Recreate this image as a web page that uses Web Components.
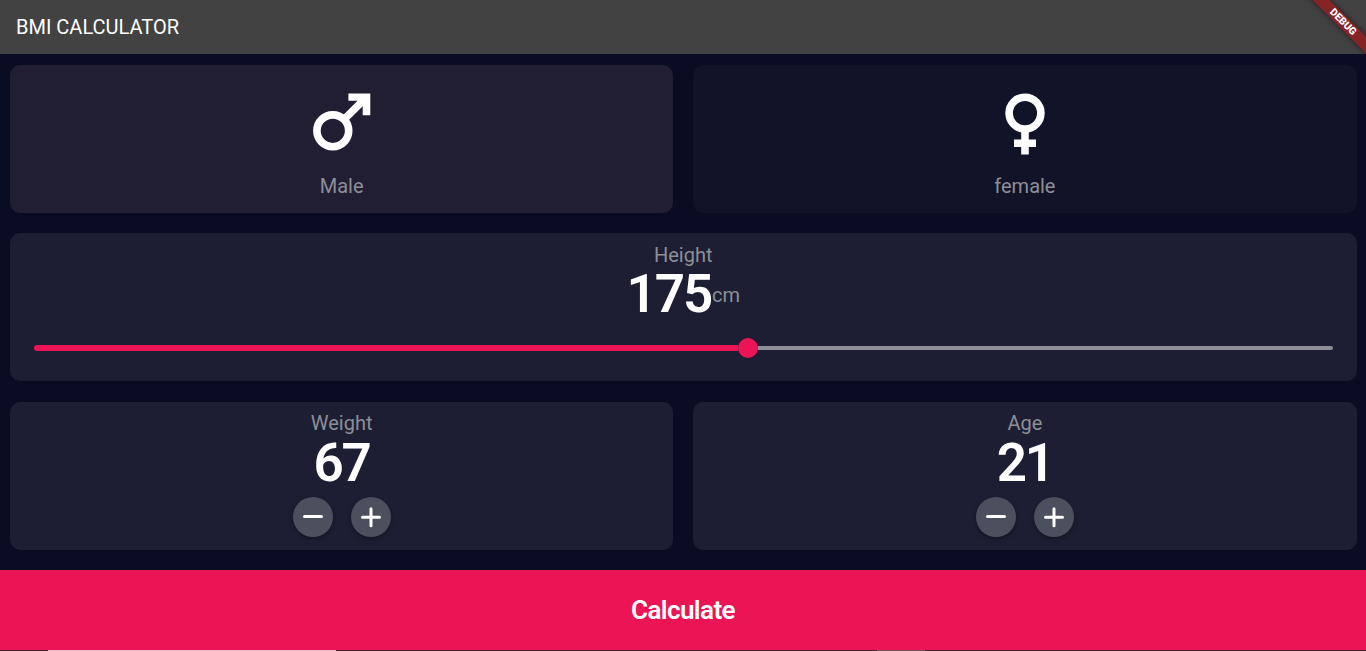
<!DOCTYPE html>
<html lang="en">
<head>
<meta charset="utf-8">
<title>BMI Calculator</title>
<style>
html,body{margin:0;height:100%;overflow:hidden;background:#090c22}
body{font-family:Roboto,sans-serif;color:#fff}
</style>
</head>
<body>
<bmi-app></bmi-app>
<script>
class Base extends HTMLElement {
  connectedCallback() {
    if (this.shadowRoot) return;
    this.attachShadow({mode: 'open'}).innerHTML = this.render();
  }
}

class AppHeader extends Base {
  render() {
    return `<style>
      :host{display:flex;align-items:center;position:relative;overflow:hidden;box-sizing:border-box;height:54px;padding-left:16px;background:#424242}
      h1{margin:0;font-size:20px;font-weight:450;line-height:24px;white-space:nowrap}
      .banner{position:absolute;right:-36.5px;top:16px;width:120px;height:12px;line-height:12px;background:#852326;transform:rotate(45deg);text-align:center;font-size:10.2px;font-weight:900;box-shadow:0 0 6px #0008}
    </style><h1><slot></slot></h1><div class="banner">DEBUG</div>`;
  }
}

class BmiCard extends Base {
  render() {
    return `<style>
      :host{display:flex;flex-direction:column;align-items:center;flex:1;min-width:0;box-sizing:border-box;border-radius:10px;background:#1d1e33}
      :host([tone=active]){background:#211e33}
      :host([tone=idle]){background:#111328}
    </style><slot></slot>`;
  }
}

class GenderIcon extends Base {
  render() {
    const male = `<svg width="60" height="64" viewBox="312 92 60 64"><circle cx="332.8" cy="130.8" r="15.9"/><path d="M344.7 118.9 366 97.6"/><path class="fill" d="M348.4 93.4H370.3V115.2H362.7V106.1L357.4 100.8H348.4z"/></svg>`;
    const female = `<svg width="42" height="64" viewBox="1004 92 42 64"><circle cx="1025" cy="113.1" r="15.9"/><path d="M1025 131v23.4M1014 143.2h22"/></svg>`;
    return `<style>
      :host{display:block;height:64px;margin-top:27.3px}
      svg{display:block;fill:none;stroke:#fff;stroke-width:7.6}
      .fill{fill:#fff;stroke:none}
    </style>${this.getAttribute('kind') === 'male' ? male : female}`;
  }
}

class CardLabel extends Base {
  render() {
    return `<style>:host{display:block;font-size:20px;line-height:24px;color:#8d8e98;white-space:nowrap}</style><slot></slot>`;
  }
}

class BigNumber extends Base {
  render() {
    return `<style>
      :host{display:flex;align-items:center;justify-content:center;height:54px;font-size:53px;line-height:54px;font-weight:600;margin-top:.4px;letter-spacing:-2.1px}
      ::slotted(card-label){font-weight:400;margin:3px 0 0 .8px;letter-spacing:0}
    </style><slot></slot><slot name="unit"></slot>`;
  }
}

class HeightSlider extends Base {
  render() {
    return `<style>
      :host{display:flex;align-items:center;align-self:stretch;height:20px;margin:17px 24px 0}
      .on{width:704px;height:6px;border-radius:3px 0 0 3px;background:#eb1555}
      .thumb{width:20px;height:20px;border-radius:50%;background:#eb1555}
      .off{flex:1;height:4px;border-radius:0 2px 2px 0;background:#8d8e98}
    </style><div class="on"></div><div class="thumb"></div><div class="off"></div>`;
  }
}

class RoundButton extends Base {
  render() {
    const d = this.getAttribute('kind') === 'plus' ? 'M11.5 20.3h17M20 11.8v17' : 'M11.5 19.6h17';
    return `<style>
      :host{display:block;width:40px;height:40px;border-radius:50%;background:#4c4f5e;box-shadow:0 2px 5px #0005}
      svg{display:block;stroke:#fff;stroke-width:3;stroke-linecap:round}
    </style><svg width="40" height="40"><path d="${d}"/></svg>`;
  }
}

class StepperButtons extends Base {
  render() {
    return `<style>:host{display:flex;gap:18px;margin-top:7px}</style>
      <round-button kind="minus"></round-button><round-button kind="plus"></round-button>`;
  }
}

class CalculateBar extends Base {
  render() {
    return `<style>
      :host{display:flex;align-items:center;justify-content:center;height:80px;background:#eb1555;font-size:26px;font-weight:650}
      span{letter-spacing:-.6px}
    </style><span><slot></slot></span>`;
  }
}

class BottomEdge extends Base {
  render() {
    return `<style>
      :host{display:flex;height:1px;background:#46202e}
      i{height:1px}
      .a{width:288px;margin-left:48px;background:#f2b5c4}
      .b{width:48px;margin-left:541px;background:#79515d}
    </style><i class="a"></i><i class="b"></i>`;
  }
}

class BmiApp extends Base {
  render() {
    return `<style>
      :host{display:flex;flex-direction:column;height:651px;background:#090c22}
      main{flex:1;display:grid;grid-template-rows:repeat(3,148px);row-gap:20.5px;padding:10.5px 9.5px 0 10px}
      .row{display:flex;gap:20px}
      .gender{margin-top:18.4px}
      .label{margin-top:9.6px}
      .third .label{margin-top:9px}
      .third big-number{margin-top:1px}
    </style>
    <app-header>BMI CALCULATOR</app-header>
    <main>
      <div class="row">
        <bmi-card tone="active"><gender-icon kind="male"></gender-icon><card-label class="gender">Male</card-label></bmi-card>
        <bmi-card tone="idle"><gender-icon kind="female"></gender-icon><card-label class="gender">female</card-label></bmi-card>
      </div>
      <div class="row">
        <bmi-card><card-label class="label">Height</card-label><big-number>175<card-label slot="unit">cm</card-label></big-number><height-slider></height-slider></bmi-card>
      </div>
      <div class="row third">
        <bmi-card><card-label class="label">Weight</card-label><big-number>67</big-number><stepper-buttons></stepper-buttons></bmi-card>
        <bmi-card><card-label class="label">Age</card-label><big-number>21</big-number><stepper-buttons></stepper-buttons></bmi-card>
      </div>
    </main>
    <calculate-bar>Calculate</calculate-bar>
    <bottom-edge></bottom-edge>`;
  }
}

customElements.define('app-header', AppHeader);
customElements.define('bmi-card', BmiCard);
customElements.define('gender-icon', GenderIcon);
customElements.define('card-label', CardLabel);
customElements.define('big-number', BigNumber);
customElements.define('height-slider', HeightSlider);
customElements.define('round-button', RoundButton);
customElements.define('stepper-buttons', StepperButtons);
customElements.define('calculate-bar', CalculateBar);
customElements.define('bottom-edge', BottomEdge);
customElements.define('bmi-app', BmiApp);
</script>
</body>
</html>
